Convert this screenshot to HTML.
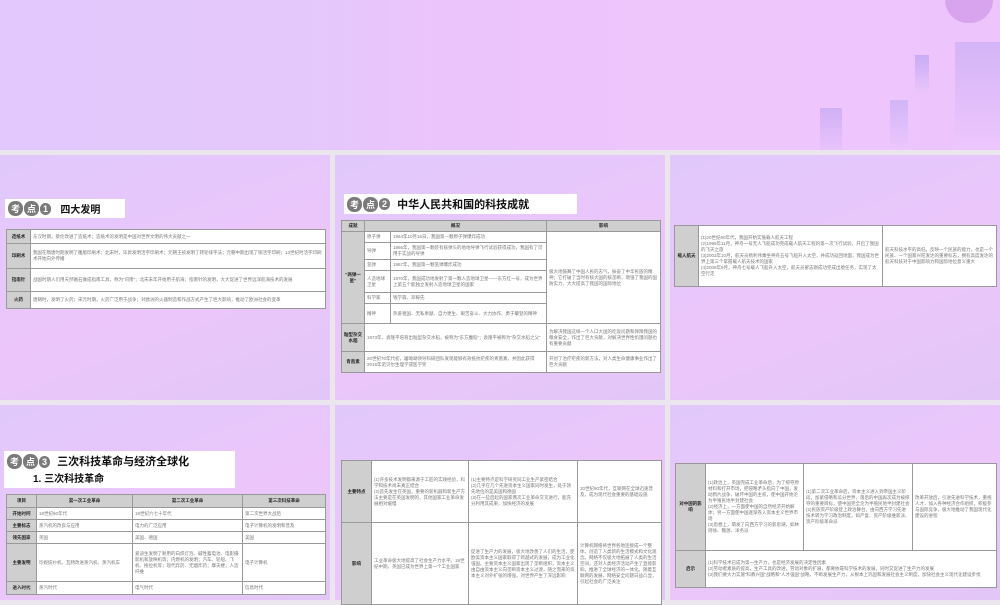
<!DOCTYPE html><html><head><meta charset="utf-8"><style>
*{margin:0;padding:0;box-sizing:border-box}
body{width:1000px;height:600px;overflow:hidden;background:#ebe6ee;position:relative;font-family:"Liberation Serif","Noto Serif CJK SC",serif}
.a{position:absolute}
.th{position:absolute;background:linear-gradient(160deg,#e0c8fb,#ecc6fb 55%,#e2c6f8);overflow:hidden}
.hd{position:absolute;background:#fff;display:flex;align-items:center;font-family:"Liberation Sans","Noto Sans CJK SC",sans-serif;font-weight:bold;color:#111}
.kd{display:inline-block;background:#7a7a7a;color:#fff;border-radius:7px;font-size:9px;padding:1px 3px;margin-right:1px}
table{position:absolute;border-collapse:collapse;background:#fff;table-layout:fixed;border:1.5px solid #666}
td{border:1px solid #999;font-size:4.5px;line-height:6px;color:#777;padding:0 2px;vertical-align:middle;overflow:hidden;font-family:"Liberation Sans","Noto Sans CJK SC",sans-serif}
td.l{background:#cfcfcf;color:#222;font-weight:bold;text-align:center}
tr.h td{background:#cfcfcf;color:#222;font-weight:bold;text-align:center}
.b{opacity:.55}
</style></head><body>
<div class="a" style="left:0;top:0;width:1000px;height:150px;background:linear-gradient(90deg,#e2c8fc,#e4c8fc 30%,#ecc4fc 45%,#eec6fc 70%,#eec4fc)"></div>
<div class="a" style="left:945px;top:0;width:48px;height:23px;border-radius:0 0 24px 24px;background:#d8a4ee"></div>
<div class="a b" style="left:955px;top:42px;width:45px;height:108px;background:linear-gradient(#c0a8f4,#ecc8fc)"></div>
<div class="a b" style="left:915px;top:55px;width:14px;height:40px;background:linear-gradient(#a898f0,#ecc8fc)"></div>
<div class="a b" style="left:890px;top:100px;width:18px;height:50px;background:linear-gradient(#b8a8f4,#ecc8fc)"></div>
<div class="a b" style="left:820px;top:108px;width:22px;height:42px;background:linear-gradient(#b8a0f0,#e4c0fa)"></div>

<div class="th" style="left:0;top:155px;width:330px;height:245px"></div>
<div class="th" style="left:335px;top:155px;width:330px;height:245px"></div>
<div class="th" style="left:670px;top:155px;width:330px;height:245px"></div>
<div class="th" style="left:0;top:405px;width:330px;height:195px"></div>
<div class="th" style="left:335px;top:405px;width:330px;height:195px"></div>
<div class="th" style="left:670px;top:405px;width:330px;height:195px"></div>

<div class="hd" style="left:5px;top:199px;width:120px;height:19px;padding-left:3px;font-size:10px"><span class="kd">考</span><span class="kd">点</span><span class="kd">1</span>&nbsp;&nbsp;&nbsp;四大发明</div>
<table style="left:6px;top:229px;width:320px;height:80px"><col style="width:24px"><col>
<tr style="height:14px"><td class="l">造纸术</td><td>东汉时期，蔡伦改进了造纸术；造纸术的发明是中国对世界文明的伟大贡献之一</td></tr>
<tr style="height:25px"><td class="l">印刷术</td><td>我国在隋唐时期发明了雕版印刷术；北宋时，毕昇发明活字印刷术；元朝王祯发明了转轮排字法；元朝中期出现了铜活字印刷；13世纪时活字印刷术开始向外传播</td></tr>
<tr style="height:23px"><td class="l">指南针</td><td>战国时期人们用天然磁石做成指南工具，称为“司南”；北宋末年开始用于航海；指南针的发明，大大促进了世界远洋航海技术的发展</td></tr>
<tr><td class="l">火药</td><td>唐朝时，发明了火药；宋元时期，火药广泛用于战争；对欧洲的火器制造和作战方式产生了巨大影响，推动了欧洲社会的变革</td></tr></table>

<div class="hd" style="left:344px;top:194px;width:233px;height:20px;padding-left:3px;font-size:11px"><span class="kd">考</span><span class="kd">点</span><span class="kd">2</span>&nbsp;&nbsp;中华人民共和国的科技成就</div>
<table style="left:341px;top:220px;width:320px;height:153px"><col style="width:23px"><col style="width:26px"><col style="width:156px"><col>
<tr class="h" style="height:11px"><td>成就</td><td colspan="2">概况</td><td>影响</td></tr>
<tr style="height:11px"><td class="l" rowspan="6">“两弹一星”</td><td>原子弹</td><td>1964年10月16日，我国第一颗原子弹爆炸成功</td><td rowspan="6">极大地鼓舞了中国人民的志气，振奋了中华民族的精神；它打破了当时有核大国的核垄断，增强了我国的国防实力，大大提高了我国的国际地位</td></tr>
<tr style="height:17px"><td>导弹</td><td>1966年，我国第一颗装有核弹头的地地导弹飞行试验获得成功，我国有了可用于实战的导弹</td></tr>
<tr style="height:11px"><td>氢弹</td><td>1967年，我国第一颗氢弹爆炸成功</td></tr>
<tr style="height:22px"><td>人造地球卫星</td><td>1970年，我国成功地发射了第一颗人造地球卫星——东方红一号，成为世界上第五个能独立发射人造地球卫星的国家</td></tr>
<tr style="height:11px"><td>科学家</td><td>钱学森、邓稼先</td></tr>
<tr style="height:20px"><td>精神</td><td>热爱祖国、无私奉献、自力更生、艰苦奋斗、大力协作、勇于攀登的精神</td></tr>
<tr style="height:28px"><td class="l">籼型杂交水稻</td><td colspan="2">1973年，袁隆平培育出籼型杂交水稻，被称为“东方魔稻”；袁隆平被称为“杂交水稻之父”</td><td>为解决我国这样一个人口大国的吃饭问题和保障我国的粮食安全，作出了巨大贡献，对解决世界性饥饿问题也有重要贡献</td></tr>
<tr><td class="l">青蒿素</td><td colspan="2">20世纪70年代初，屠呦呦领导科研团队发现能够有效抵抗疟疾的青蒿素，并因此获得2015年诺贝尔生理学或医学奖</td><td>开创了治疗疟疾的新方法，对人类生命健康事业作出了巨大贡献</td></tr></table>

<table style="left:674px;top:225px;width:323px;height:62px"><col style="width:24px"><col style="width:184px"><col>
<tr><td class="l">载人航天</td><td>(1)20世纪90年代，我国开始实施载人航天工程<br>(2)1999年11月，神舟一号无人飞船成功完成载人航天工程的第一次飞行试验，开启了我国的飞天之旅<br>(3)2003年10月，航天员杨利伟乘坐神舟五号飞船升入太空，并成功返回地面，我国成为世界上第三个掌握载人航天技术的国家<br>(4)2008年9月，神舟七号载人飞船升入太空，航天员翟志刚成功完成出舱任务，实现了太空行走</td><td>航天科技水平的高低，反映一个民族的能力，也是一个民族、一个国家兴旺发达的重要标志，拥有高度发达的航天科技对于中国影响力和国际地位意义重大</td></tr></table>

<div class="hd" style="left:4px;top:451px;width:231px;height:37px;display:block;padding:2px 3px;font-size:11px"><div><span class="kd">考</span><span class="kd">点</span><span class="kd">3</span>&nbsp;&nbsp;三次科技革命与经济全球化</div><div style="margin-left:26px;font-size:10px;margin-top:1px">1. 三次科技革命</div></div>
<table style="left:6px;top:494px;width:320px;height:101px"><col style="width:30px"><col style="width:96px"><col style="width:110px"><col>
<tr class="h" style="height:13px"><td>项目</td><td>第一次工业革命</td><td>第二次工业革命</td><td>第三次科技革命</td></tr>
<tr style="height:12px"><td class="l">开始时间</td><td>18世纪60年代</td><td>19世纪六七十年代</td><td>第二次世界大战后</td></tr>
<tr style="height:12px"><td class="l">主要标志</td><td>蒸汽机的改良与应用</td><td>电力的广泛应用</td><td>电子计算机的发明和普及</td></tr>
<tr style="height:12px"><td class="l">领先国家</td><td>英国</td><td>美国、德国</td><td>美国</td></tr>
<tr style="height:38px"><td class="l">主要发明</td><td>珍妮纺纱机、瓦特改进蒸汽机、蒸汽机车</td><td>爱迪生发明了耐用的白炽灯泡、碱性蓄电池、电影摄影机和放映机等；内燃机的发明；汽车、轮船、飞机、拖拉机等；现代炸药、无烟炸药；摩天楼；人造纤维</td><td>电子计算机</td></tr>
<tr><td class="l">进入时代</td><td>蒸汽时代</td><td>电气时代</td><td>信息时代</td></tr></table>

<table style="left:341px;top:460px;width:321px;height:145px"><col style="width:30px"><col style="width:97px"><col style="width:109px"><col>
<tr style="height:62px"><td class="l">主要特点</td><td>(1)许多技术发明都来源于工匠的实践经验，科学和技术尚未真正结合<br>(2)首先发生在英国，重要的新机器和新生产方法主要是在英国发明的，其他国家工业革命发展相对缓慢</td><td>(1)主要特点是科学研究同工业生产紧密结合<br>(2)几乎在几个先进资本主义国家同时发生，处于领先地位的是美国和德国<br>(3)在一些后起的国家两次工业革命交叉进行，能充分利用其成果，加快经济的发展</td><td>20世纪90年代，互联网在全球迅速普及，成为现代社会重要的基础设施</td></tr>
<tr><td class="l">影响</td><td>工业革命极大地提高了社会生产力水平。19世纪中期，英国已成为世界上第一个工业国家</td><td>促进了生产力的发展，极大地改善了人们的生活，使欧美资本主义国家取得了跨越式的发展，成为工业化强国。主要资本主义国家出现了垄断组织，资本主义由自由资本主义向垄断资本主义过渡，随之而来的资本主义对外扩张的增强，对世界产生了深远影响</td><td>计算机网络将世界各地连接成一个整体，创造了人类新的生活模式和文化观念。网络不仅极大地拓展了人类的生活空间，还对人类经济活动产生了直接影响，推进了全球经济的一体化。随着互联网的发展，网络安全问题日益凸显，引起社会的广泛关注</td></tr></table>

<table style="left:675px;top:463px;width:322px;height:125px"><col style="width:30px"><col style="width:98px"><col style="width:109px"><col>
<tr style="height:87px"><td class="l">对中国的影响</td><td>(1)政治上，英国完成工业革命后，为了掠夺原材料和打开市场，把侵略矛头指向了中国，发动鸦片战争，破坏中国的主权，使中国开始沦为半殖民地半封建社会<br>(2)经济上，一方面使中国的自然经济开始解体；另一方面使中国逐渐卷入资本主义世界市场<br>(3)思想上，萌发了向西方学习的新思潮，如林则徐、魏源、洋务派</td><td>(1)第二次工业革命后，资本主义进入到帝国主义阶段，加紧侵略和瓜分世界，落后的中国再次成为被掠夺的重要目标，使中国完全沦为半殖民地半封建社会<br>(2)民族资产阶级登上政治舞台，由向西方学习先进技术转为学习政治制度，如严复、资产阶级维新派、资产阶级革命派</td><td>改革开放后，引进先进科学技术，重视人才，加入各种经济合作组织，积极参与国际竞争，极大地推动了我国现代化建设的进程</td></tr>
<tr><td class="l">启示</td><td colspan="3">(1)科学技术已成为第一生产力，也是经济发展的决定性因素<br>(2)劳动者素质的提高，生产工具的改进，劳动对象的扩展，都要依靠科学技术的发展，同时又促进了生产力的发展<br>(3)我们要大力实施“科教兴国”战略和“人才强国”战略，不断发展生产力，从根本上巩固和发展社会主义制度，加快社会主义现代化建设步伐</td></tr></table>
</body></html>
